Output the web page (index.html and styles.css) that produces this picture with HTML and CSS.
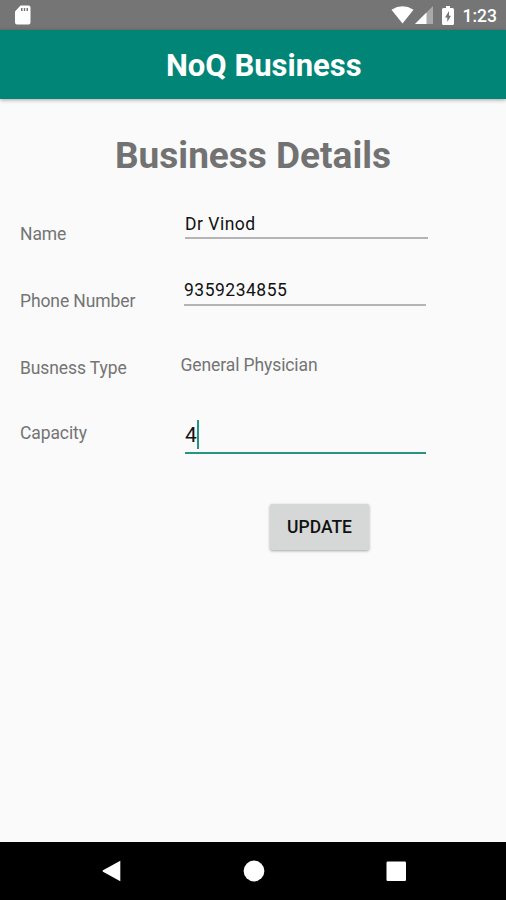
FILE: index.html
```html
<!DOCTYPE html>
<html lang="en">
<head>
<meta charset="utf-8">
<title>NoQ Business</title>
<link rel="stylesheet" href="styles.css">
</head>
<body>
<div class="status-bar">
  <svg class="sd-icon" width="18" height="22" viewBox="0 0 18 22"><path fill="#fff" fill-rule="evenodd" d="M6.500 1.500H14.500Q16.500 1.500 16.500 3.500V18.500Q16.500 20.500 14.500 20.500H3Q1 20.500 1 18.500V7.500ZM7 4V7H8.500V4ZM9.800 4V7H11.200V4ZM12.500 4V7H14V4Z"/></svg>
  <div class="status-right">
    <svg width="23" height="20" viewBox="0 0 24 20"><path fill="#fff" d="M.5 4.500Q12 -2.800 23.500 4.500L12 19Z"/></svg>
    <svg class="signal" width="18" height="18" viewBox="0 0 18 18"><path fill="#a9a9a9" d="M0 18L18 0V18Z"/><path fill="#fff" d="M0 18L11.500 6.500V18Z"/></svg>
    <svg class="battery" width="12" height="19" viewBox="0 0 12 19"><path fill="#fff" fill-rule="evenodd" d="M4 0H8V2H10.500Q12 2 12 3.500V17.500Q12 19 10.500 19H1.500Q0 19 0 17.500V3.500Q0 2 1.500 2H4ZM7 5L3 11.500H5.300V16L9 9.800H7Z"/></svg>
    <span class="clock">1:23</span>
  </div>
</div>
<header class="app-bar"><h1>NoQ Business</h1></header>
<main>
  <h2>Business Details</h2>
  <div class="form">
    <div class="row name"><span class="label">Name</span><span class="field">Dr Vinod</span></div>
    <div class="row phone"><span class="label">Phone Number</span><span class="field">9359234855</span></div>
    <div class="row type"><span class="label">Busness Type</span><span class="value">General Physician</span></div>
    <div class="row capacity"><span class="label">Capacity</span><span class="field active">4<i class="caret"></i></span></div>
  </div>
  <button class="update">UPDATE</button>
</main>
<nav class="nav-bar">
  <svg width="22" height="24" viewBox="0 0 22 24"><path fill="#fff" d="M19.300 1.800V22.200L2 12.700Q1 12 2 11.300Z"/></svg>
  <svg width="22" height="22" viewBox="0 0 22 22"><circle cx="11" cy="11" r="10.400" fill="#fff"/></svg>
  <svg width="22" height="22" viewBox="0 0 22 22"><rect x="1.500" y="1.500" width="19.500" height="19.500" rx="1.200" fill="#fff"/></svg>
</nav>
</body>
</html>
```
FILE: styles.css
```css
* { box-sizing: border-box; }
body {
  margin: 0;
  height: 900px;
  display: flex;
  flex-direction: column;
  background: #fafafa;
  font-family: Roboto, sans-serif;
  overflow: hidden;
}
.status-bar {
  height: 30px;
  flex: none;
  display: flex;
  align-items: center;
  justify-content: space-between;
  padding: 0 9px 0 14px;
  background: #757575;
}
.status-right { display: flex; align-items: center; }
.signal { margin-left: 1px; }
.battery { margin: 0 9px 0 9px; }
.clock { color: #fff; font-size: 17.500px; font-weight: 500; line-height: 30px; padding-top: 2px; }
.app-bar {
  height: 68.500px;
  flex: none;
  padding-left: 166px;
  background: #018577;
  box-shadow: 0 1px 4px rgba(0, 0, 0, .35);
}
h1 { margin: 0; color: #fff; font-size: 31px; font-weight: 700; line-height: 72px; white-space: nowrap; }
main { flex: 1; }
h2 {
  margin: 33px 0 0 115px;
  color: #727272;
  font-size: 37px;
  font-weight: 700;
  line-height: 48px;
  white-space: nowrap;
}
.form { margin-top: 34.500px; }
.row { display: flex; height: 66.500px; padding-left: 20px; }
.label, .value { font-size: 17.500px; letter-spacing: -.1px; line-height: 20px; color: #747474; white-space: nowrap; }
.label { width: 165px; padding-top: 10px; }
.field {
  width: 242px;
  height: 25px;
  border-bottom: 2px solid #b4b4b4;
  font-size: 17.500px;
  letter-spacing: .5px;
  line-height: 20px;
  color: #111;
}
.name .field { width: 243px; }
.phone .label { width: 164px; }
.phone .field { margin-top: -1px; height: 26px; }
.type .label { width: 160.500px; padding-top: 11px; }
.type .value { padding-top: 8px; }
.capacity .field {
  width: 241px;
  height: 40px;
  border-bottom: 2px solid #269680;
  display: flex;
  align-items: flex-start;
  font-size: 21px;
  letter-spacing: 0;
  line-height: 31px;
  padding-top: 6px;
}
.capacity .label { padding-top: 9px; }
.caret { width: 2px; height: 29px; background: #269680; }
.update {
  display: block;
  width: 99px;
  height: 46px;
  margin: 24px 0 0 270px;
  padding: 0;
  border: 0;
  border-radius: 2px;
  background: #d6d7d7;
  box-shadow: 0 1px 3px rgba(0, 0, 0, .35);
  color: #111;
  font: 500 17.500px/46px Roboto, sans-serif;
}
.nav-bar {
  height: 58px;
  flex: none;
  display: flex;
  align-items: center;
  justify-content: space-between;
  padding: 0 99px 0 101px;
  background: #000;
}
```
